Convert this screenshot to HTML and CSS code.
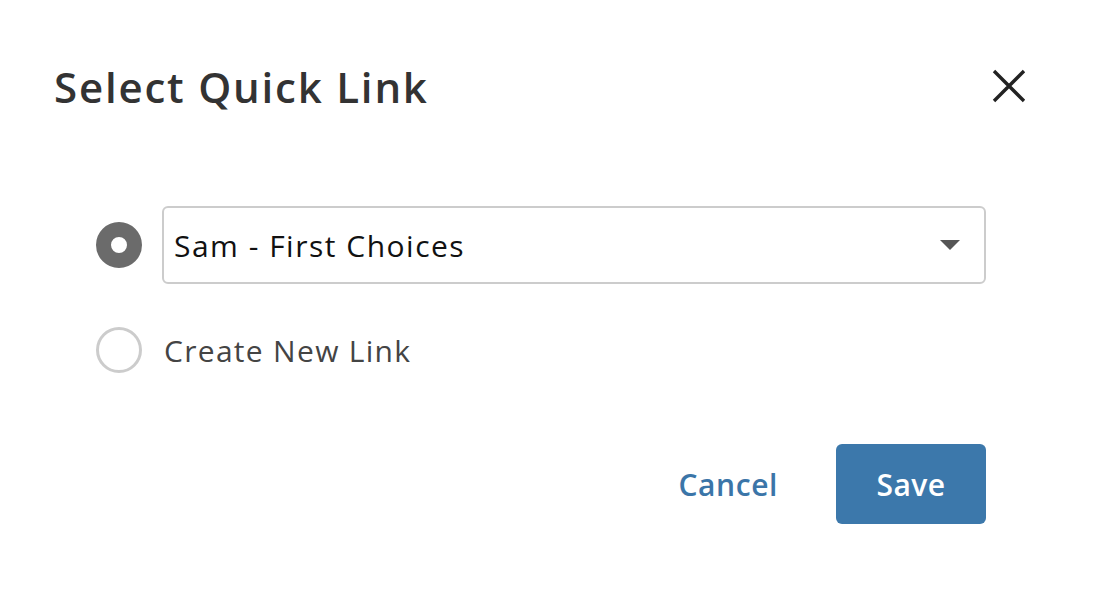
FILE: index.html
```html
<!DOCTYPE html>
<html>
<head>
<meta charset="utf-8">
<link rel="stylesheet" href="styles.css">
</head>
<body>
<div class="dialog">
  <div class="header">
    <h1 class="title">Select Quick Link</h1>
    <button class="close" aria-label="Close">
      <svg width="34" height="34" viewBox="0 0 34 34"><path d="M2 2 L32 32 M32 2 L2 32" stroke="#222" stroke-width="3.4" fill="none"/></svg>
    </button>
  </div>
  <div class="options">
    <div class="option">
      <span class="radio checked"></span>
      <div class="select">
        <span class="select-text">Sam - First Choices</span>
        <span class="caret"></span>
      </div>
    </div>
    <div class="option">
      <span class="radio"></span>
      <span class="label">Create New Link</span>
    </div>
  </div>
  <div class="actions">
    <button class="cancel">Cancel</button>
    <button class="save">Save</button>
  </div>
</div>
</body>
</html>
```
FILE: styles.css
```css
html, body {
  margin: 0;
  padding: 0;
  background: #fff;
}
body {
  font-family: "Open Sans", "Noto Sans", sans-serif;
  width: 1094px;
  height: 590px;
  overflow: hidden;
}
.dialog {
  padding: 56px 108px 0 54px;
}
.header {
  display: flex;
  justify-content: space-between;
  align-items: center;
  height: 60px;
}
.title {
  margin: 0;
  font-size: 42px;
  font-weight: 600;
  color: #333;
  letter-spacing: 1.8px;
}
.close {
  border: none;
  background: none;
  padding: 0;
  margin-right: -40px;
  width: 34px;
  height: 34px;
  cursor: pointer;
}
.options {
  margin-top: 90px;
  padding-left: 42px;
  display: flex;
  flex-direction: column;
  gap: 43px;
}
.option {
  display: flex;
  align-items: center;
  gap: 20px;
}
.radio {
  width: 46px;
  height: 46px;
  box-sizing: border-box;
  border-radius: 50%;
  border: 3px solid #ccc;
  flex: none;
}
.radio.checked {
  border: 15px solid #6b6b6b;
  background: #fff;
}
.select {
  flex: 1;
  height: 78px;
  box-sizing: border-box;
  border: 2px solid #ccc;
  border-radius: 6px;
  display: flex;
  align-items: center;
  justify-content: space-between;
  padding: 0 24px 0 10px;
}
.select-text {
  font-size: 30px;
  color: #111;
  letter-spacing: 1.5px;
}
.caret {
  width: 0;
  height: 0;
  border-left: 10px solid transparent;
  border-right: 10px solid transparent;
  border-top: 10px solid #555;
}
.label {
  font-size: 30px;
  color: #444;
  letter-spacing: 1.3px;
  margin-left: 2px;
}
.actions {
  margin-top: 71px;
  display: flex;
  justify-content: flex-end;
  align-items: center;
  gap: 58px;
}
.cancel {
  border: none;
  background: none;
  padding: 0;
  font-family: inherit;
  font-size: 30px;
  font-weight: 600;
  color: #3b75a8;
  letter-spacing: 0.6px;
}
.save {
  border: none;
  background: #3c78ab;
  color: #fff;
  font-family: inherit;
  font-size: 30px;
  font-weight: 600;
  letter-spacing: 0.5px;
  width: 150px;
  height: 80px;
  border-radius: 6px;
}
```
